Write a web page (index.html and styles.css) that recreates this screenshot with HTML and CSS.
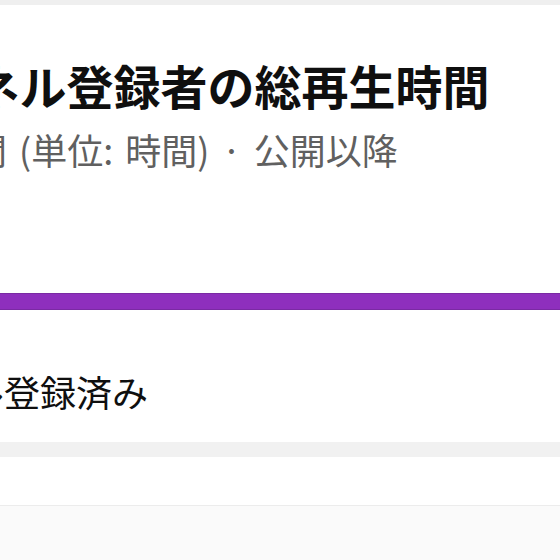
FILE: index.html
```html
<!DOCTYPE html>
<html lang="ja">
<head>
    <meta charset="UTF-8">
    <title>チャンネル登録者の総再生時間</title>
    <link rel="stylesheet" href="styles.css">
</head>
<body>
    <div class="top-band"></div>
    <div class="card">
        <div class="card-body">
            <h2 class="title">チャンネル登録者の総再生時間</h2>
            <p class="subtitle">総再生時間 (単位: 時間) · 公開以降</p>
        </div>
        <div class="bar"></div>
        <div class="card-body">
            <p class="legend">チャンネル登録済み</p>
        </div>
    </div>
    <div class="gap"></div>
    <div class="card short"></div>
    <div class="footer"></div>
</body>
</html>
```

FILE: styles.css
```css
body {
    margin: 0;
    background: #ffffff;
    font-family: "Noto Sans CJK JP", "Noto Sans", sans-serif;
    color: #0f0f0f;
    overflow: hidden;
    height: 560px;
}
.top-band {
    height: 5px;
    background: #efefef;
}
.card {
    background: #ffffff;
}
.card-body {
    margin-left: -167px;
}
.title {
    margin: 0;
    padding-top: 52px;
    font-size: 47px;
    line-height: 56px;
    font-weight: bold;
    white-space: nowrap;
}
.subtitle {
    margin: 0 0 0 -6px;
    padding-top: 14px;
    font-size: 36px;
    line-height: 44px;
    word-spacing: 4px;
    color: #606060;
    white-space: nowrap;
}
.bar {
    margin-top: 122px;
    height: 17px;
    background: #8e2fbd;
    border-top: 1px solid #7a2aa3;
    border-bottom: 1px solid #7a2aa3;
    box-sizing: border-box;
}
.legend {
    margin: 0 0 0 -8px;
    padding-top: 59px;
    padding-bottom: 29px;
    font-size: 36px;
    line-height: 44px;
    white-space: nowrap;
}
.gap {
    height: 15px;
    background: #f1f1f1;
}
.card.short {
    height: 48px;
}
.footer {
    height: 60px;
    background: #fafafa;
    border-top: 1px solid #ececec;
}
```
